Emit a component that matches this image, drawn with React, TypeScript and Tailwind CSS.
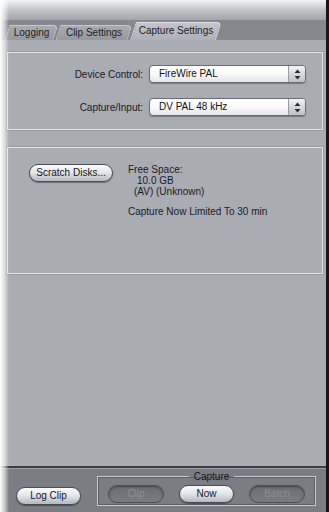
import React from 'react';

const font = { fontFamily: '"Liberation Sans", Arial, sans-serif' };

function Stepper() {
  return <svg width="7" height="11" viewBox="0 0 7 11">
      <path d="M3.5 0.5 L6.5 4 L0.5 4 Z" fill="#2a2b30" />
      <path d="M3.5 10.5 L6.5 7 L0.5 7 Z" fill="#2a2b30" />
    </svg>;
}

function PopUp({ value }: { value: string }) {
  return <div className="w-[157px] h-[18px] rounded-[4px] border border-[#6a6c73] bg-linear-to-b from-white via-[#fafafb] to-[#e4e5e9] flex shadow-[0_1px_1px_rgba(0,0,0,0.3)]">
      <span className="flex-1 pl-[9px] leading-[16px] text-[10px] text-[#111]">{value}</span>
      <span className="w-[17px] border-l border-[#9a9ca3] rounded-r-[3px] bg-linear-to-b from-[#f4f5f7] via-[#d6d8de] to-[#bfc2ca] flex items-center justify-center">
        <Stepper />
      </span>
    </div>;
}

function Pill({ label, w, disabled }: { label: string; w: string; disabled?: boolean }) {
  return <button className={`${w} h-[18px] rounded-full text-[10px] leading-[16px] border ${disabled ? 'border-[#4d4f55] bg-linear-to-b from-[#6a6c73] to-[#7b7d84] text-[#8c8e94] shadow-[inset_0_1px_2px_rgba(0,0,0,0.35)]' : 'border-[#4a4c52] bg-linear-to-b from-[#fbfbfc] via-[#e2e4e9] to-[#b4b7c0] text-[#151515] shadow-[0_1px_1px_rgba(0,0,0,0.35)]'}`}>
      {label}
    </button>;
}

function Tab({ label, w, active }: { label: string; w: string; active?: boolean }) {
  return <div className={`relative ${w} ${active ? 'h-[18px]' : 'h-[15px]'} flex items-center justify-center`}>
      <div className={`absolute inset-0 -skew-x-[18deg] rounded-tr-[5px] border-l border-t border-r ${active ? 'bg-linear-to-b from-[#c2c4ca] to-[#aeb0b7] border-[#e0e1e4]' : 'bg-linear-to-b from-[#a9abb2] to-[#96989f] border-[#c7c8cc]'}`} />
      <span className="relative text-[10px] text-[#1c1c1f] leading-none">{label}</span>
    </div>;
}

export default function App() {
  return <div style={font} className="relative w-[329px] h-[512px] overflow-hidden border-r-[3px] border-[#16171a] bg-[#a9abb3] flex flex-col">
      <div className="h-[20px] bg-linear-to-b from-[#f3f3f4] via-[#c2c3c8] to-[#a3a5ac]" />
      <div className="h-[20px] bg-[#86888f] flex items-end pl-[7px]">
        <Tab label="Logging" w="w-[49px]" />
        <Tab label="Clip Settings" w="w-[72px] ml-[2px]" />
        <Tab label="Capture Settings" w="w-[86px] ml-[3px]" active />
      </div>
      <div className="flex-1 flex flex-col pl-[7px] pr-[3px] pt-[12px] bg-[#aaacb4]">
        <div className="h-[78px] border border-[#e4e5e8] shadow-[0_0_0_1px_#979aa1] flex flex-col gap-[15px] pt-[12px]">
          <div className="flex items-center">
            <span className="w-[135px] text-right text-[10px] text-[#1a1a1d]">Device Control:</span>
            <span className="ml-[6px]"><PopUp value="FireWire PAL" /></span>
          </div>
          <div className="flex items-center">
            <span className="w-[135px] text-right text-[10px] text-[#1a1a1d]">Capture/Input:</span>
            <span className="ml-[6px]"><PopUp value="DV PAL 48 kHz" /></span>
          </div>
        </div>
        <div className="mt-[17px] h-[127px] border border-[#e4e5e8] shadow-[0_0_0_1px_#979aa1] flex pt-[16px] pl-[21px]">
          <Pill label="Scratch Disks..." w="w-[84px] h-[17px]" />
          <div className="ml-[15px] text-[10px] leading-[11px] text-[#1a1a1d]">
            <div>Free Space:</div>
            <div className="pl-[9px]">10.0 GB</div>
            <div className="pl-[6px]">(AV) (Unknown)</div>
            <div className="mt-[9px]">Capture Now Limited To 30 min</div>
          </div>
        </div>
      </div>
      <div className="h-[2px] bg-[#3c3e44]" />
      <div className="h-[1px] bg-[#9c9ea5]" />
      <div className="h-[43px] bg-[#7b7d85] flex items-start pl-[16px]">
        <div className="mt-[13px]">
          <Pill label="Log Clip" w="w-[65px]" />
        </div>
        <fieldset className="ml-[16px] mt-[2px] w-[219px] h-[35px] border border-[#c9cace] shadow-[inset_0_0_0_1px_#5d5f66] flex items-start gap-[15px] pl-[10px] pt-[3px]">
          <legend className="mx-auto px-[5px] text-[10px] leading-[11px] text-[#151517]">Capture</legend>
          <Pill label="Clip" w="w-[56px]" disabled />
          <Pill label="Now" w="w-[55px]" />
          <Pill label="Batch" w="w-[56px]" disabled />
        </fieldset>
      </div>
      <div className="absolute inset-y-0 left-0 w-[9px] bg-linear-to-r from-white via-white/60 to-transparent pointer-events-none" />
    </div>;
}
